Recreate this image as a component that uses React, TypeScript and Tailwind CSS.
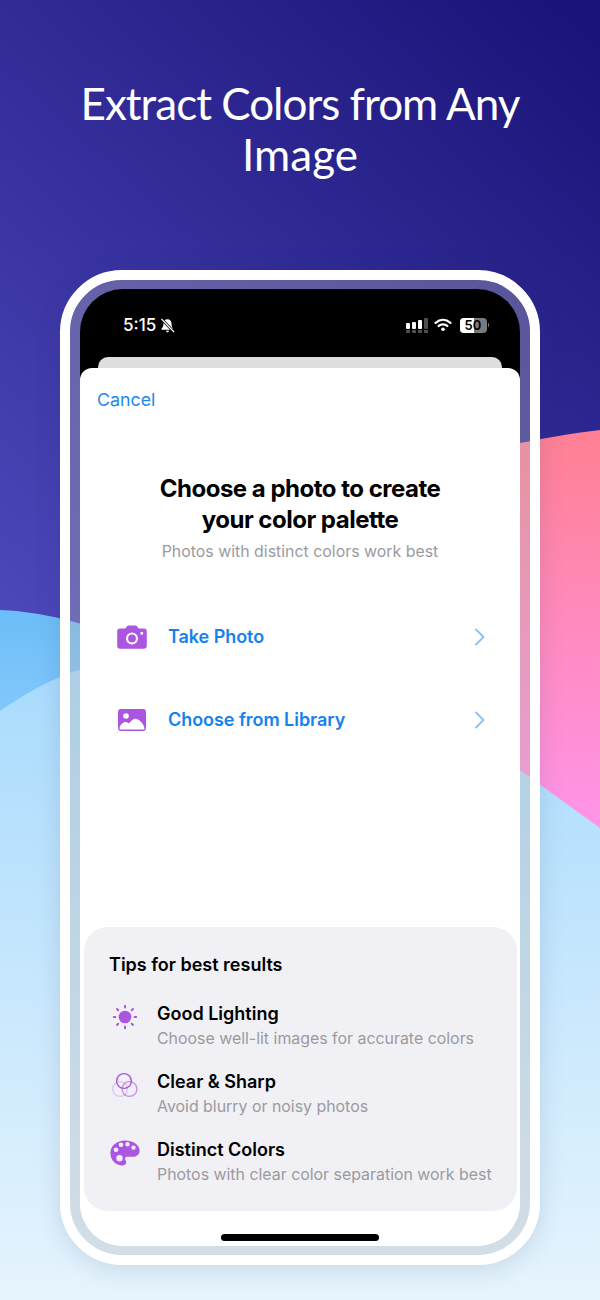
const sf = { fontFamily: "Inter, 'Liberation Sans', sans-serif" };

function Wifi() {
  return (
    <svg width="18" height="14" viewBox="0 0 20 15" fill="none" stroke="white" strokeLinecap="round">
      <path d="M1.800 5.200C6.800.8 13.200.8 18.200 5.200" strokeWidth="2.500" />
      <path d="M5.200 8.600C8 6.300 12 6.300 14.800 8.600" strokeWidth="2.500" />
      <circle cx="10" cy="12.200" r="2" fill="white" stroke="none" />
    </svg>
  );
}

function SignalBar({ h, dim }: { h: string; dim?: boolean }) {
  return (
    <div className="flex flex-col items-center justify-end gap-[1px] h-[16px] w-[4px]">
      <div className={`w-[4px] ${h} rounded-[1px] ${dim ? "bg-white/30" : "bg-white"}`} />
      <div className="w-[4px] h-[3px] bg-white/30" />
    </div>
  );
}

function Signal() {
  return (
    <div className="flex items-end gap-[2px]">
      <SignalBar h="h-[6px]" />
      <SignalBar h="h-[7px]" />
      <SignalBar h="h-[9px]" />
      <SignalBar h="h-[11px]" dim />
    </div>
  );
}

function Battery() {
  return (
    <div className="flex items-center gap-[1px]">
      <div className="relative w-[27px] h-[15px] rounded-[4px] bg-[#7a7a7a] overflow-hidden">
        <div className="w-[14px] h-[15px] bg-white" />
        <div className="absolute inset-0 flex items-center justify-center text-[13px] font-semibold leading-none text-black">50</div>
      </div>
      <div className="w-[1.500px] h-[4px] rounded-r bg-[#7a7a7a]" />
    </div>
  );
}

function BellOff() {
  return (
    <svg width="15" height="15" viewBox="0 0 15 15" fill="white">
      <path d="M7.500 1.200c-2.600 0-4 2-4 4.400 0 2.800-1 4-2 5.200v.9h11.600v-1C12 9.500 11.500 8 11.500 5.600c0-2.400-1.400-4.400-4-4.400z" />
      <path d="M6 12.800h3c0 .9-.7 1.500-1.500 1.500S6 13.700 6 12.800z" />
      <path d="M1.500 1 14 14" stroke="black" strokeWidth="2.600" />
      <path d="M1.500 1 14 14" stroke="white" strokeWidth="1.100" />
    </svg>
  );
}

function Camera() {
  return (
    <svg width="30" height="24" viewBox="0 0 30 24">
      <path fill="#ab55e0" fillRule="evenodd" d="M3 3.500h5.500L10 1.300C10.500.6 11 .4 11.800.4h6.400c.8 0 1.300.2 1.800.9l1.500 2.200H27c1.600 0 2.800 1.200 2.800 2.800v14.600c0 1.600-1.200 2.800-2.800 2.800H3C1.400 23.700.2 22.500.2 20.900V6.300C.2 4.700 1.400 3.500 3 3.500zM15 7.400a6 6 0 1 0 0 12 6 6 0 0 0 0-12zm0 2.100a3.900 3.900 0 1 1 0 7.800 3.900 3.900 0 0 1 0-7.800zM24.800 6.700a1.500 1.500 0 1 0 0 3 1.500 1.500 0 0 0 0-3z" />
    </svg>
  );
}

function Photo() {
  return (
    <svg className="ml-px" width="28" height="22" viewBox="0 0 28 22">
      <rect x="0" y="0" width="28" height="22" rx="3" fill="#ab55e0" />
      <circle cx="8" cy="7" r="2.800" fill="white" />
      <path fill="white" d="M1.500 19.500c0-2.500 3-6.500 5.800-6.500 1.800 0 2.500 1.200 3.500 1.200 1.500 0 3-4.500 6.500-4.500 4 0 9.200 6 9.200 9.800 0 .6-.4.9-1 .9H2.500c-.6 0-1-.3-1-.9z" />
    </svg>
  );
}

function Sun() {
  const rays = [0, 45, 90, 135, 180, 225, 270, 315];
  return (
    <svg className="ml-[2px]" width="26" height="26" viewBox="0 0 26 26">
      <circle cx="13" cy="13" r="6.300" fill="#ab55e0" />
      {rays.map((a) => (
        <rect key={a} x="12" y="0.800" width="2" height="3.600" rx="1" fill="#ab55e0" transform={`rotate(${a} 13 13)`} />
      ))}
    </svg>
  );
}

function Circles() {
  return (
    <svg width="30" height="30" viewBox="0 0 30 30" fill="none">
      <circle cx="14" cy="11" r="7.400" stroke="#ab55e0" strokeWidth="1.400" />
      <circle cx="19.500" cy="19" r="7.400" stroke="#ab55e0" strokeOpacity="0.600" strokeWidth="1.400" />
      <circle cx="10" cy="19" r="7.400" stroke="#ab55e0" strokeOpacity="0.250" strokeWidth="1.400" />
    </svg>
  );
}

function Palette() {
  return (
    <svg width="30" height="26" viewBox="0 0 30 26">
      <path fill="#ab55e0" fillRule="evenodd" d="M15 .6C7 .6.4 5.800.4 13.200c0 7 5.600 12.200 11.800 12.200 2.500 0 4-1.400 4-3.200 0-1-.5-1.600-.9-2.300-.4-.7-.6-1.300-.3-2 .5-1 1.500-1.100 2.800-1.100h4.500c4 0 7.300-1.800 7.300-6C29.600 4.400 22.500.6 15 .6zM6 12a2.300 2.300 0 1 1 0-4.600A2.300 2.300 0 0 1 6 12zm5-5a2.300 2.300 0 1 1 0-4.600A2.300 2.300 0 0 1 11 7zm6.500-.6a2.200 2.200 0 1 1 0-4.400 2.200 2.200 0 0 1 0 4.400zm6 3.400a2.200 2.200 0 1 1 0-4.400 2.200 2.200 0 0 1 0 4.400zM9.500 21.500a3.200 3.200 0 1 1 0-6.400 3.200 3.200 0 0 1 0 6.400z" />
    </svg>
  );
}

function Chevron() {
  return (
    <svg width="11" height="18" viewBox="0 0 11 18" fill="none" stroke="#8cc0f5" strokeWidth="1.800" strokeLinecap="round" strokeLinejoin="round">
      <path d="M2 1.500 9.500 9 2 16.500" />
    </svg>
  );
}

function Action({ icon, label }: { icon: React.ReactNode; label: string }) {
  return (
    <div className="flex items-center h-[40px] pl-[37px] pr-[35px]">
      <div className="w-[51px] flex justify-start">{icon}</div>
      <div className="flex-1 text-[18px] leading-[24px] font-semibold tracking-[-0.05px] text-[#1482ee]">{label}</div>
      <Chevron />
    </div>
  );
}

function Tip({ icon, title, sub }: { icon: React.ReactNode; title: string; sub: string }) {
  return (
    <div className="flex items-start h-[68px]">
      <div className="w-[47px] h-[30px] flex items-center">{icon}</div>
      <div>
        <div className="text-[18px] leading-[24px] font-semibold text-black">{title}</div>
        <div className="mt-px text-[15.900px] leading-[24px] text-[#9b9b9f]">{sub}</div>
      </div>
    </div>
  );
}

export default function App() {
  return (
    <div className="relative w-[600px] h-[1300px] overflow-hidden" style={sf}>
      <svg className="absolute inset-0" width="600" height="1300" viewBox="0 0 600 1300">
        <defs>
          <linearGradient id="bg" gradientUnits="userSpaceOnUse" x1="560" y1="0" x2="0" y2="620">
            <stop offset="0" stopColor="#1a1378" />
            <stop offset="1" stopColor="#4d48bb" />
          </linearGradient>
          <linearGradient id="pink" gradientUnits="userSpaceOnUse" x1="0" y1="430" x2="0" y2="810">
            <stop offset="0" stopColor="#ff8093" />
            <stop offset="1" stopColor="#ff94e6" />
          </linearGradient>
          <linearGradient id="blue" gradientUnits="userSpaceOnUse" x1="0" y1="610" x2="0" y2="720">
            <stop offset="0" stopColor="#6cbdf8" />
            <stop offset="1" stopColor="#84c8fb" />
          </linearGradient>
          <linearGradient id="light" gradientUnits="userSpaceOnUse" x1="0" y1="670" x2="0" y2="1300">
            <stop offset="0" stopColor="#a9dbfd" />
            <stop offset="1" stopColor="#e6f4fd" />
          </linearGradient>
        </defs>
        <rect width="600" height="1300" fill="url(#bg)" />
        <path d="M300 1000 L300 600 C400 520 450 455 520 443 C545 438 575 433 600 430 L600 1300 Z" fill="url(#pink)" />
        <path d="M0 610 C60 612 200 640 400 820 L400 1300 L0 1300Z" fill="url(#blue)" />
        <path d="M0 711 C30 692 70 660 180 650 C320 650 440 710 520 770 C550 792 575 810 600 828 L600 1300 L0 1300Z" fill="url(#light)" />
      </svg>

      <div className="relative flex flex-col items-center">
        <h1 className="w-full h-[270px] pt-[78px] text-center text-[44px] leading-[51px] font-normal text-white" style={{ fontFamily: "Lato, sans-serif" }}>
          <span className="tracking-[-1px]">Extract Colors from Any</span><br />Image
        </h1>

        <div className="w-[480px] h-[995px] rounded-[62px] border-[10px] border-white shadow-[0_4px_24px_rgba(40,60,100,0.15)]">
          <div className="w-[460px] h-[975px] rounded-[52px] py-[9px] px-[10px] bg-[#b7b7b7]/35">
            <div className="h-full rounded-[43px] overflow-hidden bg-[linear-gradient(#000_100px,#fff_100px)] flex flex-col">
              <div className="h-[68px] shrink-0 flex items-start justify-between pl-[43px] pr-[31px] pt-[26px] text-white">
                <div className="flex items-center gap-[4px]">
                  <span className="text-[17px] leading-[20px] font-medium">5:15</span>
                  <BellOff />
                </div>
                <div className="flex items-center h-[20px]">
                  <Signal />
                  <div className="ml-[6px] mr-[8px]"><Wifi /></div>
                  <Battery />
                </div>
              </div>
              <div className="mx-[18px] h-[11px] shrink-0 rounded-t-[10px] bg-[#dedede]" />
              <div className="flex-1 bg-white rounded-t-[12px] flex flex-col relative">
                <div className="pl-[17px] pt-[20px] text-[17.800px] leading-[24px] text-[#1c88ee]">Cancel</div>
                <div className="mt-[61px] text-center text-[24px] leading-[31px] font-bold tracking-[-0.5px] text-black">
                  Choose a photo to create<br />your color palette
                </div>
                <div className="mt-[6px] text-center text-[15.900px] leading-[22px] text-[#9b9b9f]">Photos with distinct colors work best</div>
                <div className="mt-[54px] flex flex-col gap-[43px]">
                  <Action icon={<Camera />} label="Take Photo" />
                  <Action icon={<Photo />} label="Choose from Library" />
                </div>
                <div className="mt-auto ml-[4px] mr-[3px] mb-[35px] h-[284px] rounded-[24px] bg-[#f1f0f5] pl-[26px] pr-[16px] pt-[26px]">
                  <div className="text-[18px] leading-[24px] font-semibold -ml-px text-black mb-[25px]">Tips for best results</div>
                  <Tip icon={<Sun />} title="Good Lighting" sub="Choose well-lit images for accurate colors" />
                  <Tip icon={<Circles />} title="Clear & Sharp" sub="Avoid blurry or noisy photos" />
                  <Tip icon={<Palette />} title="Distinct Colors" sub="Photos with clear color separation work best" />
                </div>
                <div className="absolute left-[141px] bottom-[5px] w-[158px] h-[7px] rounded-full bg-black" />
              </div>
            </div>
          </div>
        </div>
      </div>
    </div>
  );
}
